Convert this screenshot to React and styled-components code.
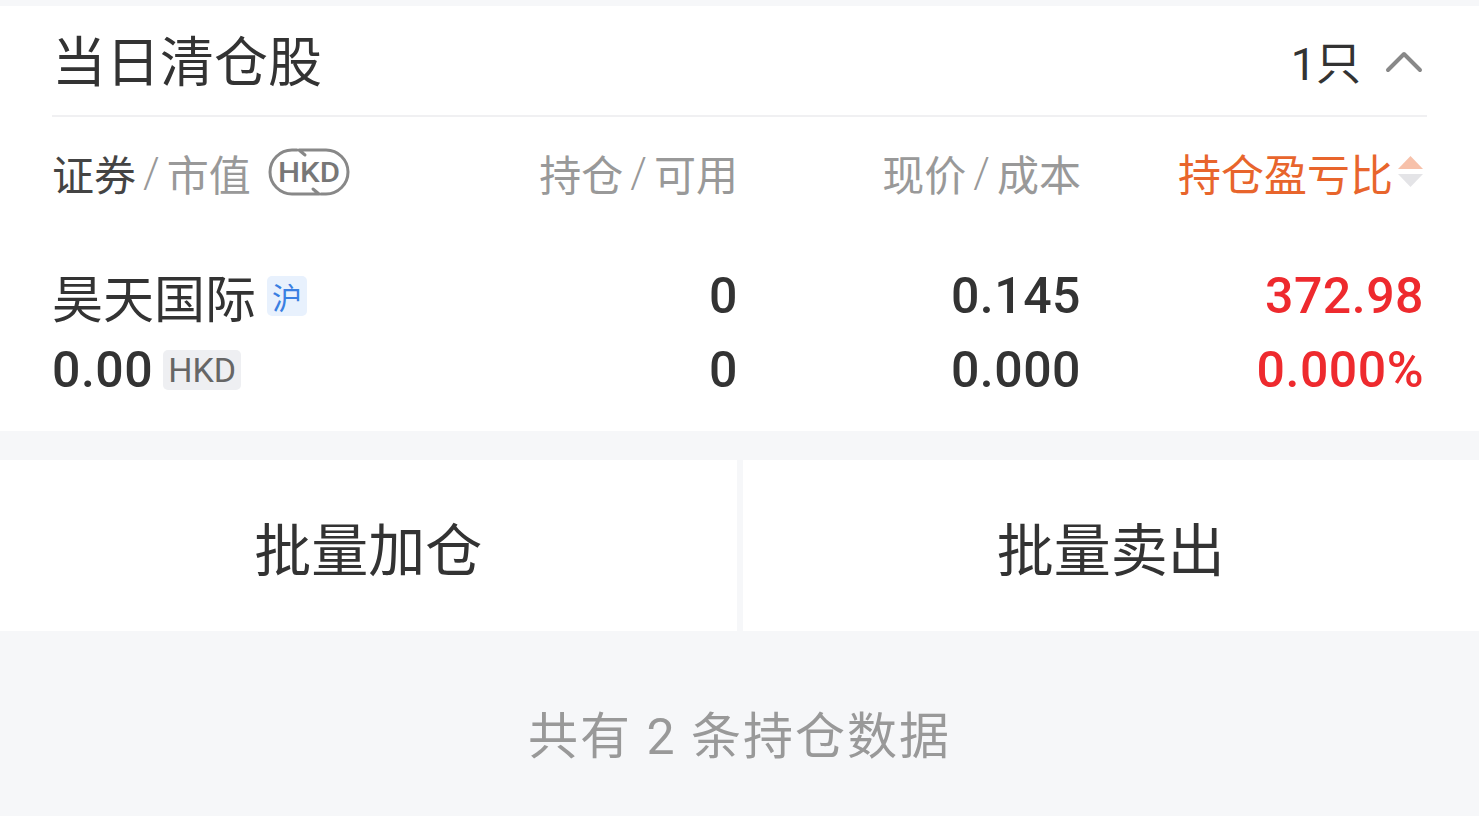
import React from "react"
import styled, { createGlobalStyle } from "styled-components"

const GlobalStyle = createGlobalStyle`
	body {
		margin: 0;
		background: #f6f7f9;
		font-family: Roboto, "Noto Sans CJK SC", sans-serif;
		color: #333;
	}
`

const Page = styled.div`
	padding-top: 6px;
	min-height: 810px;
`

const Card = styled.div`
	background: #fff;
	padding: 0 52px;
`

const TitleRow = styled.div`
	height: 109px;
	display: flex;
	align-items: center;
	justify-content: space-between;
	border-bottom: 2px solid #f0f0f2;
`

const Title = styled.div`
	font-size: 54px;
	color: #333;
	margin-top: -4px;
`

const Count = styled.div`
	display: flex;
	align-items: center;
	gap: 24px;
	font-size: 45px;
	color: #333;
	margin-right: 4px;
`

const Grid = styled.div`
	display: grid;
	grid-template-columns: repeat(4, 1fr);
	padding-right: 3px;
`

const HeadRow = styled(Grid)`
	height: 110px;
	align-items: center;
`

const HeadCell = styled.div`
	display: flex;
	align-items: center;
	justify-content: ${(p) => (p.$left ? "flex-start" : "flex-end")};
	font-size: ${(p) => (p.$active ? "43px" : "42px")};
	color: ${(p) => (p.$active ? "#e8652c" : "#999")};
	white-space: nowrap;
`

const Strong = styled.span`
	color: #444;
`

const Slash = styled.span`
	margin: 0 7px;
	font-weight: 300;
`

const Body = styled.div`
	padding: 32px 0 24px;
`

const DataRow = styled(Grid)`
	height: 74px;
	align-items: center;
`

const Cell = styled.div`
	display: flex;
	align-items: center;
	justify-content: ${(p) => (p.$left ? "flex-start" : "flex-end")};
	font-size: ${(p) => (p.$cn ? "51px" : "50px")};
	font-weight: ${(p) => (p.$cn ? 400 : 500)};
	letter-spacing: ${(p) => (p.$cn ? "0" : "0.5px")};
	color: ${(p) => (p.$red ? "#ee2a2e" : "#333")};
	white-space: nowrap;
`

const Tag = styled.span`
	display: inline-flex;
	align-items: center;
	justify-content: center;
	margin-left: ${(p) => p.$gap || "10px"};
	height: 40px;
	padding: 0 ${(p) => (p.$blue ? "5px" : "5px")};
	border-radius: 5px;
	font-size: ${(p) => (p.$blue ? "30px" : "34px")};
	font-weight: 400;
	letter-spacing: 0;
	background: ${(p) => (p.$blue ? "#e8f1fd" : "#eeeff2")};
	color: ${(p) => (p.$blue ? "#3a7fe2" : "#666")};
`

const Actions = styled.div`
	margin-top: 29px;
	display: grid;
	grid-template-columns: 1fr 1fr;
	gap: 6px;
`

const ActionButton = styled.button`
	height: 171px;
	border: none;
	background: #fff;
	font-family: inherit;
	font-size: 57px;
	color: #333;
	padding: 0;
	margin: 0;
	cursor: pointer;
`

const Footer = styled.div`
	padding-top: 76px;
	text-align: center;
	font-size: 50px;
	line-height: 60px;
	color: #999;
	letter-spacing: 2px;
`

function Chevron() {
	return (
		<svg width="38" height="24" viewBox="0 0 38 24">
			<polyline
				points="3,21 19,5 35,21"
				fill="none"
				stroke="#888"
				strokeWidth="4"
				strokeLinecap="round"
				strokeLinejoin="round"
			/>
		</svg>
	)
}

function HkdIcon() {
	return (
		<svg width="84" height="50" viewBox="0 0 84 50" style={{ marginLeft: 16 }}>
			<g fill="none" stroke="#888" strokeWidth="3" strokeLinecap="round" strokeLinejoin="round">
				<path d="M30 3 H25 A22 22 0 0 0 25 47 H52 L46 42" />
				<path d="M54 47 H59 A22 22 0 0 0 59 3 H32 L38 8" />
			</g>
			<text
				x="42"
				y="35"
				textAnchor="middle"
				fontFamily="Roboto, sans-serif"
				fontWeight="500"
				fontSize="28"
				fill="#777"
				textLength="62"
				lengthAdjust="spacingAndGlyphs"
			>
				HKD
			</text>
		</svg>
	)
}

function SortArrows() {
	return (
		<svg width="27" height="36" viewBox="0 0 27 36" style={{ marginLeft: 4 }}>
			<polygon points="13.5,2 26,15 1,15" fill="#f7c1aa" />
			<polygon points="1,20 26,20 13.5,33" fill="#e4e4e7" />
		</svg>
	)
}

const rows = [
	{
		first: (
			<>
				昊天国际<Tag $blue $gap="11px">沪</Tag>
			</>
		),
		cn: true,
		hold: "0",
		price: "0.145",
		pnl: "372.98",
	},
	{
		first: (
			<>
				0.00<Tag>HKD</Tag>
			</>
		),
		hold: "0",
		price: "0.000",
		pnl: "0.000%",
	},
]

export default function App() {
	return (
		<Page>
			<GlobalStyle />
			<Card>
				<TitleRow>
					<Title>当日清仓股</Title>
					<Count>
						1只
						<Chevron />
					</Count>
				</TitleRow>
				<HeadRow>
					<HeadCell $left>
						<Strong>证券</Strong>
						<Slash>/</Slash>
						市值
						<HkdIcon />
					</HeadCell>
					<HeadCell>
						持仓<Slash>/</Slash>可用
					</HeadCell>
					<HeadCell>
						现价<Slash>/</Slash>成本
					</HeadCell>
					<HeadCell $active>
						持仓盈亏比
						<SortArrows />
					</HeadCell>
				</HeadRow>
				<Body>
					{rows.map((r, i) => (
						<DataRow key={i}>
							<Cell $left $cn={r.cn}>
								{r.first}
							</Cell>
							<Cell>{r.hold}</Cell>
							<Cell>{r.price}</Cell>
							<Cell $red>{r.pnl}</Cell>
						</DataRow>
					))}
				</Body>
			</Card>
			<Actions>
				<ActionButton>批量加仓</ActionButton>
				<ActionButton>批量卖出</ActionButton>
			</Actions>
			<Footer>共有 2 条持仓数据</Footer>
		</Page>
	)
}
